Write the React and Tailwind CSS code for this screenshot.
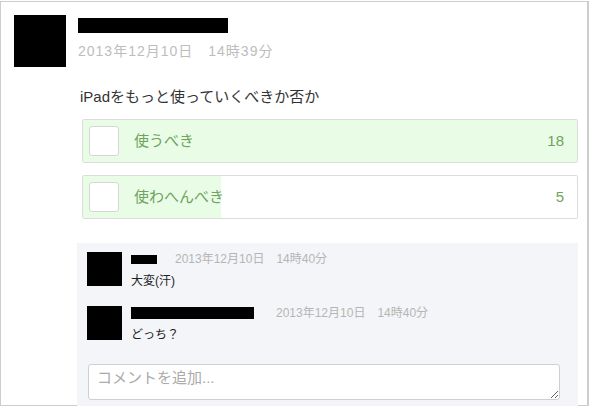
import React from "react";

const font = { fontFamily: '"Liberation Sans","Noto Sans CJK JP",sans-serif' };

function Option({ label, count, fill }) {
  return (
    <div className="relative h-[44px] w-[496px] rounded-[2px] border border-[#dcdcdc] bg-white overflow-hidden">
      <div className={`absolute left-0 top-0 h-full bg-[#e9fce6] ${fill}`} />
      <div className="relative flex h-full items-center pl-[6px] pr-[13px]">
        <div className="h-[30px] w-[30px] rounded-[3px] border border-[#d6d6d6] bg-white" />
        <div className="ml-[15px] text-[15px] text-[#6fa35f]">{label}</div>
        <div className="ml-auto text-[15px] text-[#6fa35f]">{count}</div>
      </div>
    </div>
  );
}

function Comment({ nameW, nameH, dateGap, text, top }) {
  return (
    <div className={`flex ${top}`}>
      <div className="h-[34px] w-[35px] bg-black" />
      <div className="ml-[9px] flex flex-col">
        <div className="flex items-center h-[14px]">
          <div className={`bg-black ${nameW} ${nameH}`} />
          <div className={`${dateGap} text-[12px] leading-[14px] text-[#b5b5b5]`}>2013年12月10日　14時40分</div>
        </div>
        <div className="mt-[7px] text-[12px] leading-[16px] text-[#222]">{text}</div>
      </div>
    </div>
  );
}

export default function App() {
  return (
    <div className="h-[408px] w-[590px] overflow-hidden bg-white" style={font}>
      <div className="mt-px h-[405px] w-[589px] border border-r-2 border-[#cdcdcd] bg-white">
        <div className="flex pl-[13px] pt-[13px]">
          <div className="h-[52px] w-[52px] bg-black" />
          <div className="ml-[12px] flex flex-col">
            <div className="mt-[3px] h-[15px] w-[150px] bg-black" />
            <div className="mt-[10px] text-[14px] leading-[17px] tracking-[1px] text-[#bdbdbd]">2013年12月10日　14時39分</div>
          </div>
        </div>
        <div className="ml-[79px] mt-[20px] text-[15px] leading-[20px] text-[#333]">iPadをもっと使っていくべきか否か</div>
        <div className="ml-[81px] mt-[12px] flex flex-col gap-[12px]">
          <Option label="使うべき" count="18" fill="w-full" />
          <Option label="使わへんべき" count="5" fill="w-[138px]" />
        </div>
        <div className="ml-[76px] mt-[24px] h-[163px] w-[501px] bg-[#f3f5f8] pl-[10px] pt-[9px]">
          <Comment nameW="w-[26px]" nameH="h-[9px]" dateGap="ml-[18px]" text="大変(汗)" top="" />
          <Comment nameW="w-[123px]" nameH="h-[12px]" dateGap="ml-[22px]" text="どっち？" top="mt-[17px]" />
          <textarea
            className="mt-[21px] ml-px block h-[36px] w-[472px] resize-y rounded-[3px] border border-[#cfcfcf] bg-white px-[8px] py-[3px] text-[15px] leading-[20px] text-[#333] placeholder:text-[#aaa] outline-none"
            placeholder="コメントを追加..."
            style={font}
          />
        </div>
      </div>
    </div>
  );
}
